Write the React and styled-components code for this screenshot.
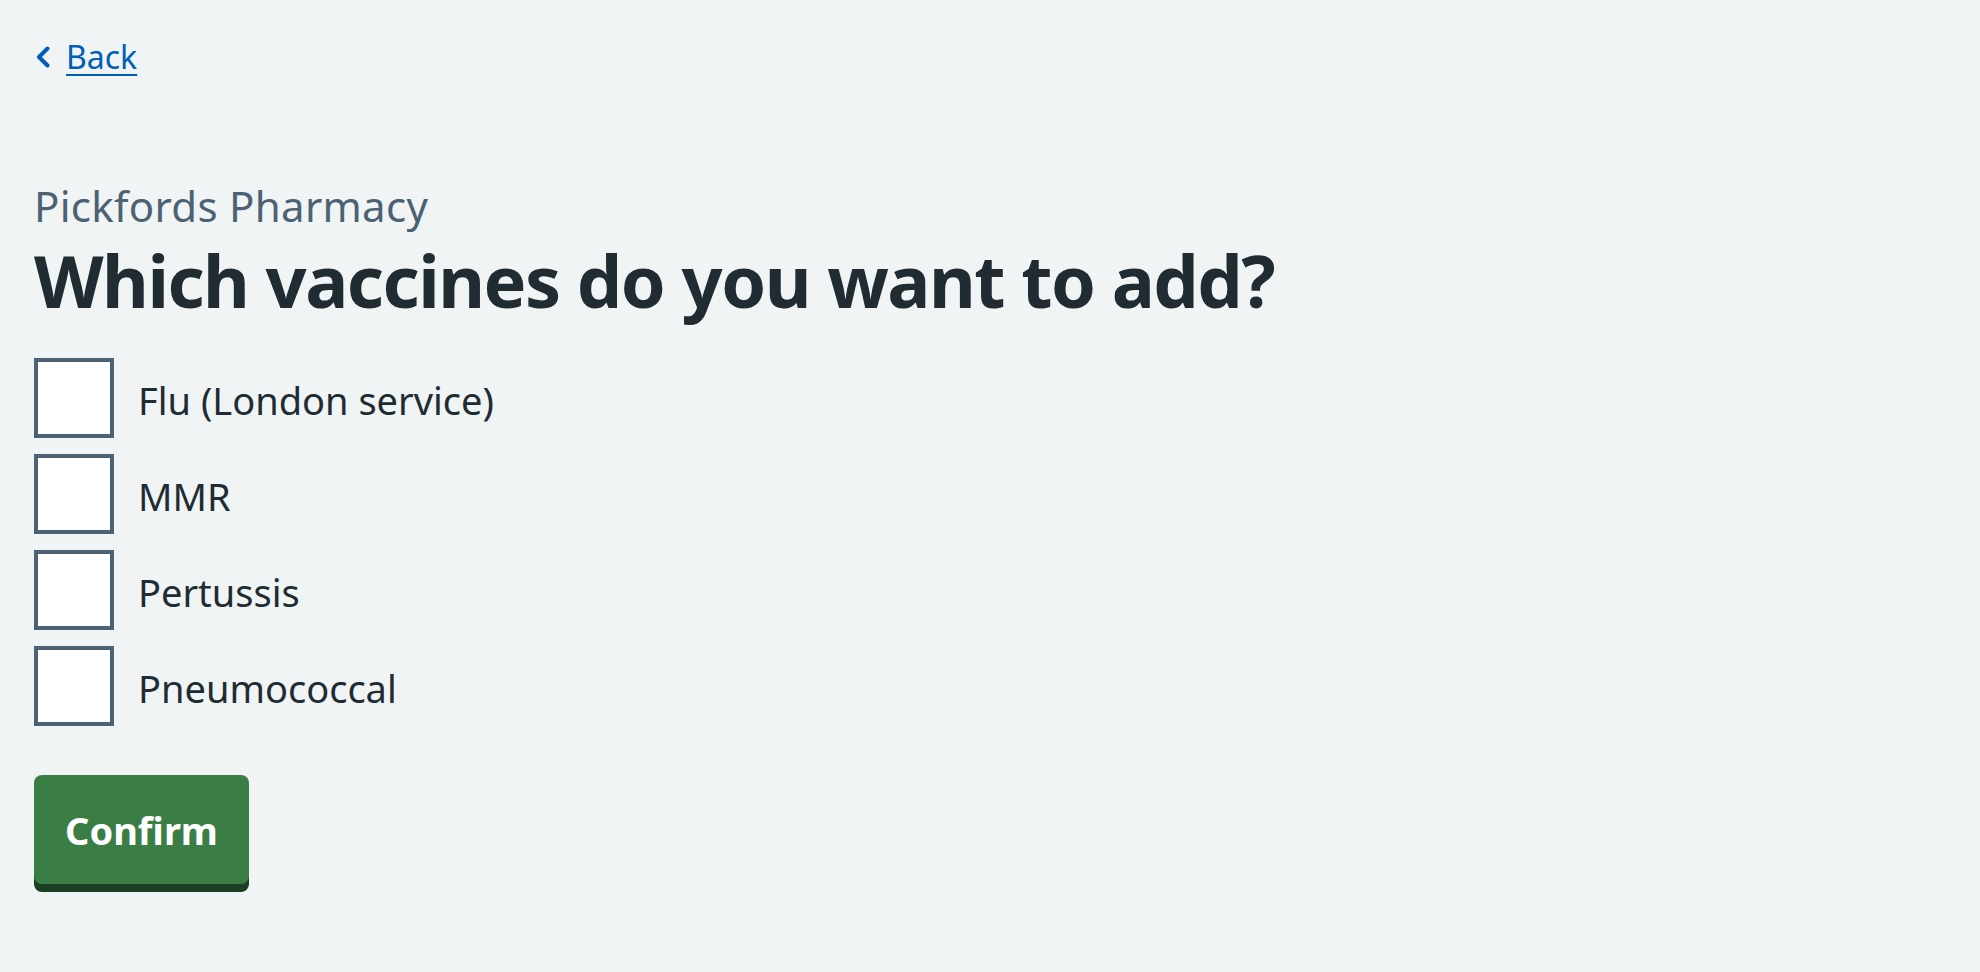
import React from 'react'
import styled, { createGlobalStyle } from 'styled-components'

const GlobalStyle = createGlobalStyle`
    html, body {
        margin: 0;
        padding: 0;
        background: #f0f4f5;
    }
    body {
        font-family: "Noto Sans", "Open Sans", Arial, sans-serif;
        color: #212b32;
    }
`

const Page = styled.main`
    min-height: 972px;
    box-sizing: border-box;
    padding: 33px 34px;
    display: flex;
    flex-direction: column;
    align-items: flex-start;
`

const BackLink = styled.a`
    display: flex;
    align-items: center;
    gap: 16px;
    height: 48px;
    font-size: 32px;
    line-height: 48px;
    color: #005eb8;
    text-decoration: underline;
    text-decoration-thickness: 2px;
    text-underline-offset: 5px;
    cursor: pointer;
    padding-left: 2px;
`

const Caption = styled.span`
    margin-top: 98px;
    font-size: 42px;
    line-height: 54px;
    letter-spacing: 0.3px;
    color: #4c6272;
`

const Heading = styled.h1`
    margin: 5px 0 0;
    font-size: 72px;
    line-height: 84px;
    letter-spacing: -1.5px;
    font-weight: 700;
    color: #212b32;
`

const CheckboxList = styled.div`
    margin-top: 36px;
    display: flex;
    flex-direction: column;
    gap: 16px;
`

const CheckboxRow = styled.label`
    display: flex;
    align-items: center;
    gap: 24px;
    cursor: pointer;
`

const Box = styled.span`
    width: 80px;
    height: 80px;
    box-sizing: border-box;
    border: 4px solid #4c6272;
    background: #ffffff;
    flex-shrink: 0;
`

const CheckboxLabel = styled.span`
    font-size: 38px;
    line-height: 52px;
    color: #212b32;
    padding-top: 4px;
`

const Button = styled.button`
    margin-top: 49px;
    height: 109px;
    padding: 0 31px;
    border: none;
    border-radius: 8px;
    background: #3a7e45;
    box-shadow: 0 8px 0 #1b3f22;
    color: #ffffff;
    font-family: inherit;
    font-size: 38px;
    font-weight: 700;
    cursor: pointer;
`

const vaccines = ['Flu (London service)', 'MMR', 'Pertussis', 'Pneumococcal']

function Chevron() {
    return (
        <svg width="14" height="22" viewBox="0 0 14 22" fill="none">
            <path d="M11.5 2.5 L3 11 L11.5 19.5" stroke="#005eb8" strokeWidth="4" strokeLinecap="round" strokeLinejoin="round" />
        </svg>
    )
}

export default function App() {
    return (
        <>
            <GlobalStyle />
            <Page>
                <BackLink>
                    <Chevron />
                    <span>Back</span>
                </BackLink>
                <Caption>Pickfords Pharmacy</Caption>
                <Heading>Which vaccines do you want to add?</Heading>
                <CheckboxList>
                    {vaccines.map((name) => (
                        <CheckboxRow key={name}>
                            <Box />
                            <CheckboxLabel>{name}</CheckboxLabel>
                        </CheckboxRow>
                    ))}
                </CheckboxList>
                <Button>Confirm</Button>
            </Page>
        </>
    )
}
